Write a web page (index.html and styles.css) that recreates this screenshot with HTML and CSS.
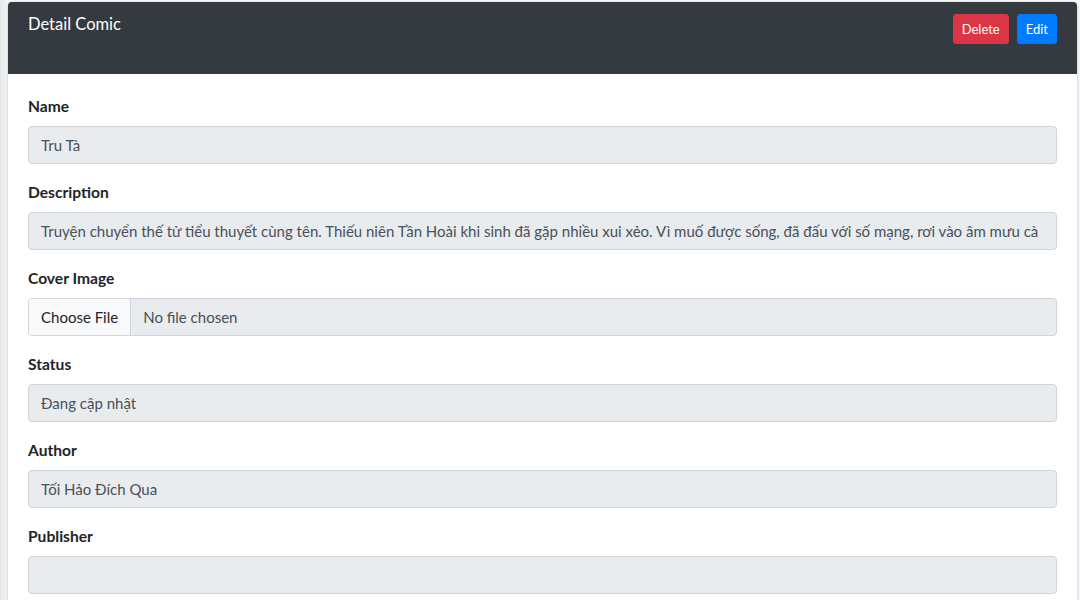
FILE: index.html
```html
<!DOCTYPE html>
<html lang="vi">
<head>
<meta charset="utf-8">
<title>Detail Comic</title>
<link rel="stylesheet" href="styles.css">
</head>
<body>
<div class="wrapper">
  <div class="card">
    <div class="card-header">
      <h3 class="card-title">Detail Comic</h3>
      <div class="card-tools">
        <button class="btn btn-danger">Delete</button>
        <button class="btn btn-primary">Edit</button>
      </div>
    </div>
    <div class="card-body">
      <div class="form-group">
        <label class="form-label">Name</label>
        <div class="form-control">Tru Tà</div>
      </div>
      <div class="form-group">
        <label class="form-label">Description</label>
        <div class="form-control">Truyện chuyển thế tử tiểu thuyết cùng tên. Thiếu niên Tần Hoài khi sinh đã gặp nhiều xui xẻo. Vì muố được sống, đã đấu với số mạng, rơi vào âm mưu cà</div>
      </div>
      <div class="form-group">
        <label class="form-label">Cover Image</label>
        <div class="form-control file-control">
          <span class="file-btn">Choose File</span>
          <span class="file-name">No file chosen</span>
        </div>
      </div>
      <div class="form-group">
        <label class="form-label">Status</label>
        <div class="form-control">Đang cập nhật</div>
      </div>
      <div class="form-group">
        <label class="form-label">Author</label>
        <div class="form-control">Tối Hảo Đích Qua</div>
      </div>
      <div class="form-group">
        <label class="form-label">Publisher</label>
        <div class="form-control"></div>
      </div>
    </div>
  </div>
</div>
</body>
</html>
```
FILE: styles.css
```css
* { box-sizing: border-box; }
html, body { margin: 0; height: 100%; }
body {
  background: linear-gradient(to right, #e6e7ea 0, #f1f2f4 6px, #f4f6f9 8px);
  font-family: Lato, "Noto Sans", sans-serif;
  color: #212529;
  font-size: 16px;
  line-height: 1.5;
  overflow: hidden;
}
.wrapper {
  padding: 2px 3px 0 8px;
}
.card {
  background: #fff;
  border-radius: 4px;
  box-shadow: 0 0 1px rgba(0,0,0,.125), 0 1px 3px rgba(0,0,0,.2);
}
.card-header {
  background: #343a40;
  color: #fff;
  border-radius: 4px 4px 0 0;
  padding: 12px 20px 0 20px;
  height: 72px;
  display: flex;
  justify-content: space-between;
  align-items: flex-start;
}
.card-title {
  margin: 0;
  font-size: 16.5px;
  font-weight: 400;
  line-height: 1.2;
  padding-top: 1px;
}
.card-tools {
  display: flex;
  gap: 8px;
}
.btn {
  font-family: inherit;
  font-size: 13px;
  line-height: 20px;
  padding: 4px 8px;
  border: 1px solid transparent;
  border-radius: 3px;
  color: #fff;
  cursor: pointer;
}
.btn-danger { background: #dc3545; border-color: #dc3545; }
.btn-primary { background: #007bff; border-color: #007bff; }
.card-body {
  padding: 20px 20px 1px 20px;
}
.form-group { margin-bottom: 16px; }
.form-label {
  display: block;
  font-weight: 700;
  font-size: 15.6px;
  margin-bottom: 8px;
  line-height: 24px;
}
.form-control {
  height: 38px;
  padding: 6px 12px;
  background: #e9ecef;
  border: 1px solid #ced4da;
  border-radius: 4px;
  color: #495057;
  font-size: 15px;
  line-height: 24px;
  white-space: nowrap;
  overflow: hidden;
}
.file-control {
  display: flex;
  padding: 0;
}
.file-btn {
  background: #f8f9fa;
  border-right: 1px solid #ced4da;
  padding: 6px 12px;
  color: #212529;
}
.file-name {
  padding: 6px 12px;
}
```
